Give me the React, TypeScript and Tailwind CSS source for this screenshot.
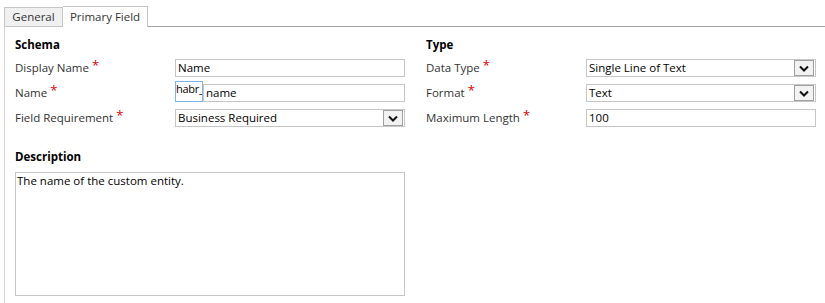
import React from "react";

type FieldProps = {
  label: string;
  required?: boolean;
  children: React.ReactNode;
};

const Field: React.FC<FieldProps> = ({ label, required, children }) => {
  return (
    <div className="flex h-[18px] items-center">
      <div className="flex w-[160px] items-center text-[#333333]">
        {label}
        {required && (
          <span className="ml-[3px] -mt-[6px] text-[13px] leading-none text-[#e00000]">*</span>
        )}
      </div>
      <div className="flex h-full flex-1">{children}</div>
    </div>
  );
};

const TextBox: React.FC<{ value: string }> = ({ value }) => (
  <div className="flex h-full w-full items-center border border-[#c6c6c6] bg-white px-[2px] text-black">
    {value}
  </div>
);

const Select: React.FC<{ value: string }> = ({ value }) => (
  <div className="flex h-full w-full items-center justify-between border border-[#c6c6c6] bg-white pl-[2px] pr-px text-black">
    <span>{value}</span>
    <span className="flex h-[16px] w-[20px] items-center justify-center border border-[#a0a0a0] bg-[#f2f2f2]">
      <svg width="10" height="7" viewBox="0 0 10 7">
        <path d="M1 1.5 L5 5.5 L9 1.5" fill="none" stroke="#111" strokeWidth="2" />
      </svg>
    </span>
  </div>
);

export default function App() {
  return (
    <div className="h-[303px] w-[825px] overflow-hidden bg-white font-['Segoe_UI','Open_Sans',sans-serif] text-[11.5px] leading-[16px]">
      <div className="flex items-end pl-[4px] pt-[6px]">
        <div className="flex h-[20px] w-[59px] items-center justify-center border border-[#c6c6c6] bg-[#f0f0f0] text-[#333]">
          General
        </div>
        <div className="flex h-[21px] w-[85px] items-center justify-center border border-b-0 border-l-0 border-[#c6c6c6] bg-white text-[#333]">
          Primary Field
        </div>
        <div className="h-px flex-1 bg-[#a0a0a0]" />
      </div>
      <div className="ml-[4px] flex h-[276px] gap-[21px] border-l border-[#d6d6d6] pl-[10px] pt-[10px]">
        <div className="flex w-[390px] flex-col">
          <div className="font-bold text-black">Schema</div>
          <div className="mt-[6px] flex flex-col gap-[7px]">
            <Field label="Display Name" required>
              <TextBox value="Name" />
            </Field>
            <Field label="Name" required>
              <div className="-mt-[3px] flex h-[21px] w-[28px] shrink-0 items-start overflow-hidden whitespace-nowrap border border-[#7eb4ea] bg-white text-[11px] leading-[14px] tracking-[-0.3px] text-black">
                habr_
              </div>
              <TextBox value="name" />
            </Field>
            <Field label="Field Requirement" required>
              <Select value="Business Required" />
            </Field>
          </div>
          <div className="mt-[22px] font-bold text-black">Description</div>
          <div className="mt-[7px] h-[124px] w-full border border-[#c6c6c6] bg-white px-[1px] text-black">
            The name of the custom entity.
          </div>
        </div>
        <div className="flex w-[390px] flex-col">
          <div className="font-bold text-black">Type</div>
          <div className="mt-[6px] flex flex-col gap-[7px]">
            <Field label="Data Type" required>
              <Select value="Single Line of Text" />
            </Field>
            <Field label="Format" required>
              <Select value="Text" />
            </Field>
            <Field label="Maximum Length" required>
              <TextBox value="100" />
            </Field>
          </div>
        </div>
      </div>
    </div>
  );
}
